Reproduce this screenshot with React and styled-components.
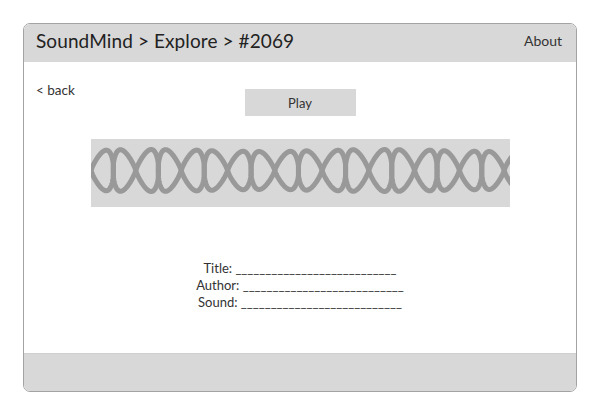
import React from "react";
import styled, { createGlobalStyle } from "styled-components";

const GlobalStyle = createGlobalStyle`
  html, body {
    margin: 0;
    padding: 0;
    background: #ffffff;
  }
  body {
    font-family: Lato, "Open Sans", "Liberation Sans", sans-serif;
    color: #333;
  }
`;

const Page = styled.div`
  padding: 23px;
  width: 600px;
  height: 415px;
  box-sizing: border-box;
`;

const Frame = styled.div`
  display: flex;
  flex-direction: column;
  width: 554px;
  height: 369px;
  box-sizing: border-box;
  border: 1px solid #a3a3a3;
  border-radius: 7px;
  overflow: hidden;
`;

const Header = styled.header`
  display: flex;
  align-items: center;
  justify-content: space-between;
  height: 38px;
  padding: 0 14px 0 12px;
  background: #d8d8d8;
  flex-shrink: 0;
`;

const Crumbs = styled.h1`
  margin: 0 0 5px;
  font-size: 19px;
  font-weight: 400;
  color: #222;
  letter-spacing: 0.1px;
`;

const NavLink = styled.a`
  font-size: 14px;
  color: #333;
  text-decoration: none;
  margin-bottom: 5px;
`;

const Content = styled.main`
  flex: 1;
  display: flex;
  flex-direction: column;
  align-items: center;
  padding: 19px 12px 0;
`;

const TopRow = styled.div`
  display: grid;
  grid-template-columns: 1fr auto 1fr;
  align-items: start;
  width: 100%;
`;

const Back = styled.a`
  font-size: 13.5px;
  line-height: 18px;
  color: #333;
  text-decoration: none;
`;

const PlayButton = styled.button`
  width: 111px;
  height: 27px;
  margin-top: 8px;
  border: none;
  background: #d8d8d8;
  font-family: inherit;
  font-size: 13px;
  color: #333;
`;

const Wave = styled.div`
  width: 419px;
  height: 68px;
  margin-top: 23px;
  background: #d8d8d8;
  overflow: hidden;
  svg {
    display: block;
  }
`;

const Fields = styled.div`
  display: flex;
  flex-direction: column;
  align-items: center;
  margin-top: 53px;
  font-size: 13px;
  line-height: 17px;
  color: #333;
`;

const Field = styled.div`
  white-space: pre;
`;

const Footer = styled.footer`
  height: 37px;
  flex-shrink: 0;
  background: #d8d8d8;
  border-top: 1px solid #cfcfcf;
`;

// two mirrored, slightly sheared strands crossing at mid height
function strand(sign) {
  const pts = [];
  const half = 23;
  const h = 20;
  const yc = 31.5;
  for (let x = -30; x <= 450; x += 0.5) {
    const t = (x / half) * Math.PI + 0.25 * Math.sin(x / 61);
    const amp = h * (1 + 0.05 * Math.sin(x / 37));
    const s = Math.sin(t);
    const dy = sign * amp * Math.sign(s) * Math.pow(Math.abs(s), 0.7);
    const px = x + 0.2 * dy * sign;
    pts.push(`${px.toFixed(2)},${(yc + dy).toFixed(2)}`);
  }
  return "M" + pts.join(" L");
}

const underline = "_".repeat(27);
const fields = ["Title:", "Author:", "Sound:"];

export default function App() {
  return (
    <>
      <GlobalStyle />
      <Page>
        <Frame>
          <Header>
            <Crumbs>SoundMind &gt; Explore &gt; #2069</Crumbs>
            <NavLink href="#">About</NavLink>
          </Header>
          <Content>
            <TopRow>
              <Back href="#">&lt; back</Back>
              <PlayButton>Play</PlayButton>
              <span />
            </TopRow>
            <Wave>
              <svg width="419" height="68" viewBox="0 0 419 68">
                <g fill="none" stroke="#999999" strokeWidth="5" strokeLinecap="round" strokeLinejoin="round">
                  <path d={strand(1)} />
                  <path d={strand(-1)} />
                </g>
              </svg>
            </Wave>
            <Fields>
              {fields.map((label) => (
                <Field key={label}>
                  {label} {underline}
                </Field>
              ))}
            </Fields>
          </Content>
          <Footer />
        </Frame>
      </Page>
    </>
  );
}
